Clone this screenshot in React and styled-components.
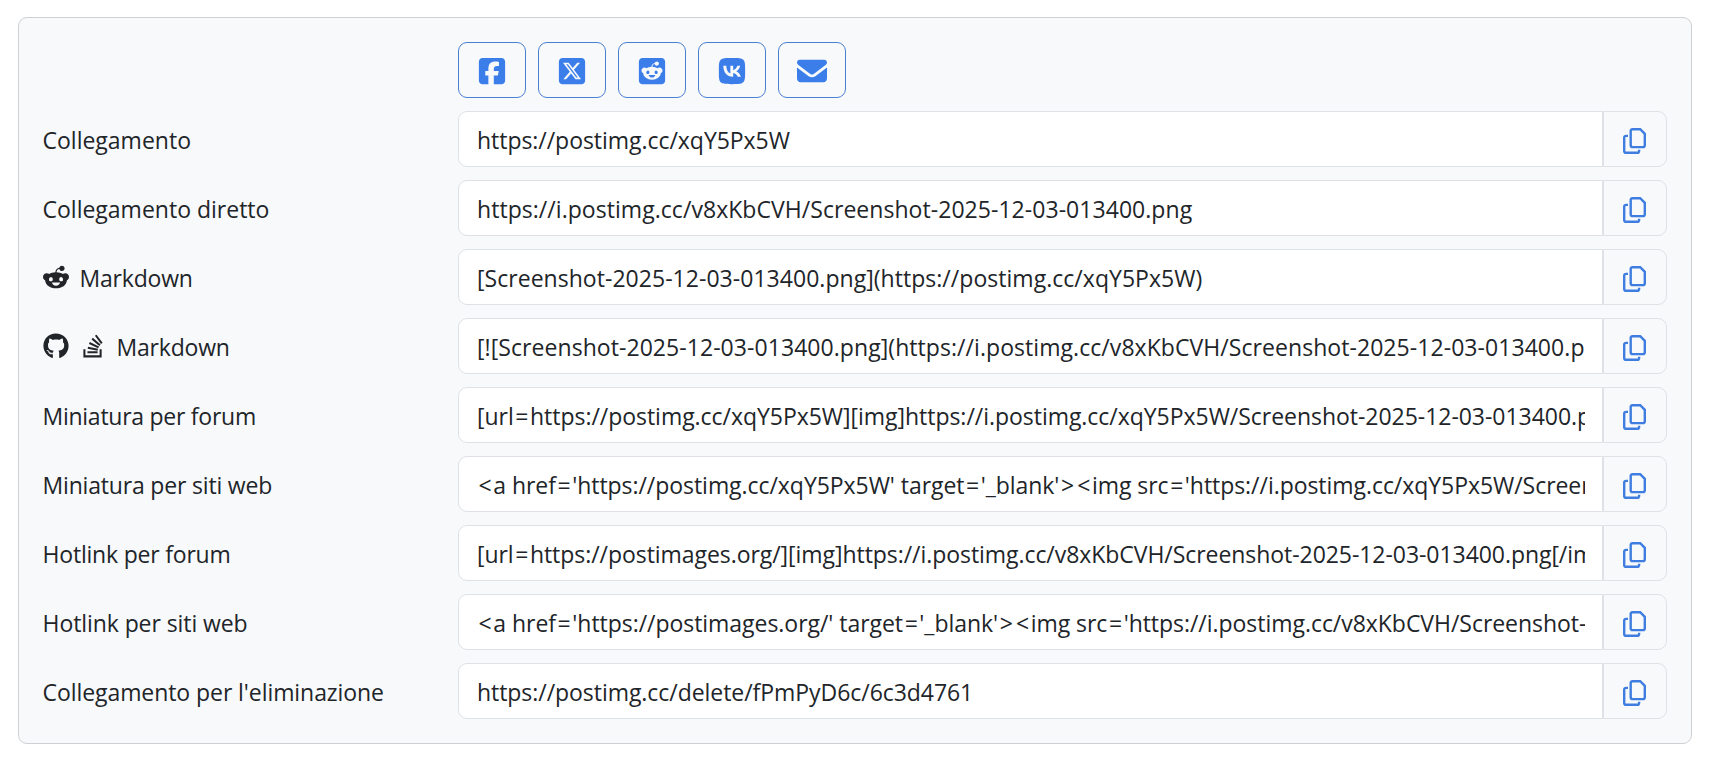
import styled, { createGlobalStyle } from 'styled-components'
import {
  FaSquareFacebook,
  FaSquareXTwitter,
  FaSquareReddit,
  FaVk,
  FaRedditAlien,
  FaGithub,
  FaStackOverflow
} from 'react-icons/fa6'

const GlobalStyle = createGlobalStyle`
  * {
    box-sizing: border-box;
  }
  body {
    margin: 0;
    background: #fff;
    color: #212529;
    font-family: 'Open Sans', 'Noto Sans', sans-serif;
    font-size: 23px;
    line-height: 36px;
  }
`;

const Panel = styled.div`
  margin: 17px 18px 15px;
  padding: 24px;
  display: flex;
  flex-direction: column;
  gap: 13px;
  background: #f8f9fb;
  border: 1px solid #ced0d4;
  border-radius: 9px;
`;

const Row = styled.div`
  display: grid;
  grid-template-columns: 415px 1fr;
  align-items: center;
  height: 56px;
`;

const Label = styled.div`
  display: flex;
  align-items: center;
  padding-top: 2px;
  white-space: nowrap;
  svg {
    flex: none;
    margin-top: -3px;
    margin-right: 11px;
  }
`;

const Text = styled.span`
  margin-left: -0.5px;
  letter-spacing: ${props => props.$spacing || 0}px;
`;

const Shares = styled.div`
  grid-column: 2;
  display: flex;
  gap: 12px;
`;

const ShareButton = styled.button`
  width: 68px;
  height: 56px;
  padding: 2px 0 0;
  display: flex;
  align-items: center;
  justify-content: center;
  background: transparent;
  color: #3b7eea;
  border: 1px solid #4a80d4;
  border-radius: 9px;
`;

const InputGroup = styled.div`
  display: flex;
  height: 56px;
  min-width: 0;
`;

const Field = styled.div`
  flex: 1;
  min-width: 0;
  padding: 10px 17px 8px 18px;
  background: #fff;
  border: 1px solid #dee2e6;
  border-radius: 9px 0 0 9px;
`;

const Value = styled.div`
  overflow: hidden;
  white-space: pre;
  letter-spacing: ${props => props.$spacing || 0}px;
`;

// < > = are set a little wider than the font has them
const Wide = styled.span`
  padding: 0 1.6px;
`;

const CopyButton = styled.button`
  width: 64px;
  padding: 4px 1px 0 0;
  display: flex;
  align-items: center;
  justify-content: center;
  background: #f8f9fb;
  color: #3f7ee0;
  border: 1px solid #dee2e6;
  border-radius: 0 9px 9px 0;
`;

const Envelope = () => (
  <svg width="30" height="30" viewBox="0 0 512 512" fill="currentColor">
    <path d="M48 64C21.500 64 0 85.500 0 112c0 15.100 7.100 29.300 19.200 38.400l208 156c17.100 12.800 40.500 12.800 57.600 0l208-156c12.100-9.100 19.200-23.300 19.200-38.400 0-26.500-21.500-48-48-48zM0 196v188c0 35.300 28.700 64 64 64h384c35.300 0 64-28.700 64-64V196L313.600 344.800c-34.100 25.600-81.100 25.600-115.200 0z" />
  </svg>
);

const Copy = () => (
  <svg width="23" height="26" viewBox="0 0 23 26" fill="none" stroke="currentColor" strokeWidth="2.4">
    <path d="M9.600 1.200h7.600l4.600 4.600v11.400q0 1.900-1.900 1.900H9.600q-1.900 0-1.900-1.900V3.100q0-1.900 1.900-1.900z" />
    <path d="M5 7.900H3.100q-1.900 0-1.900 1.900v13.100q0 1.900 1.900 1.900h11.100q1.900 0 1.900-1.900v-1.100" />
  </svg>
);

const rows = [
  { label: 'Collegamento', value: 'https://postimg.cc/xqY5Px5W', spacing: -0.04 },
  {
    label: 'Collegamento diretto',
    value: 'https://i.postimg.cc/v8xKbCVH/Screenshot-2025-12-03-013400.png',
    spacing: 0.045
  },
  {
    label: 'Markdown',
    labelSpacing: -0.2,
    icons: <FaRedditAlien size={26} />,
    value: '[Screenshot-2025-12-03-013400.png](https://postimg.cc/xqY5Px5W)',
    spacing: 0.035
  },
  {
    label: 'Markdown',
    labelSpacing: -0.2,
    icons: <><FaGithub size={26} /><FaStackOverflow size={26} /></>,
    value: '[![Screenshot-2025-12-03-013400.png](https://i.postimg.cc/v8xKbCVH/Screenshot-2025-12-03-013400.png)](https://postimg.cc/xqY5Px5W)',
    spacing: 0.06
  },
  {
    label: 'Miniatura per forum',
    labelSpacing: -0.26,
    value: '[url=https://postimg.cc/xqY5Px5W][img]https://i.postimg.cc/xqY5Px5W/Screenshot-2025-12-03-013400.png[/img][/url]',
    spacing: -0.035
  },
  {
    label: 'Miniatura per siti web',
    labelSpacing: -0.18,
    value: "<a href='https://postimg.cc/xqY5Px5W' target='_blank'><img src='https://i.postimg.cc/xqY5Px5W/Screenshot-2025-12-03-013400.png'></a>",
    spacing: -0.05
  },
  {
    label: 'Hotlink per forum',
    labelSpacing: -0.2,
    value: '[url=https://postimages.org/][img]https://i.postimg.cc/v8xKbCVH/Screenshot-2025-12-03-013400.png[/img][/url]',
    spacing: -0.055
  },
  {
    label: 'Hotlink per siti web',
    labelSpacing: -0.08,
    value: "<a href='https://postimages.org/' target='_blank'><img src='https://i.postimg.cc/v8xKbCVH/Screenshot-2025-12-03-013400.png'></a>",
    spacing: -0.04
  },
  {
    label: "Collegamento per l'eliminazione",
    labelSpacing: -0.07,
    value: 'https://postimg.cc/delete/fPmPyD6c/6c3d4761',
    spacing: -0.05
  }
]

const widen = value => value.split(/([<>=])/).map((part, i) => (
  i % 2 ? <Wide key={i}>{part}</Wide> : part
))

const App = () => (
  <>
    <GlobalStyle />
    <Panel>
      <Row>
        <Shares>
          <ShareButton><FaSquareFacebook size={30} /></ShareButton>
          <ShareButton><FaSquareXTwitter size={30} /></ShareButton>
          <ShareButton><FaSquareReddit size={30} /></ShareButton>
          <ShareButton><FaVk size={30} /></ShareButton>
          <ShareButton><Envelope /></ShareButton>
        </Shares>
      </Row>
      {rows.map((row, i) => (
        <Row key={i}>
          <Label>{row.icons}<Text $spacing={row.labelSpacing}>{row.label}</Text></Label>
          <InputGroup>
            <Field><Value $spacing={row.spacing}>{widen(row.value)}</Value></Field>
            <CopyButton><Copy /></CopyButton>
          </InputGroup>
        </Row>
      ))}
    </Panel>
  </>
);
export default App;
